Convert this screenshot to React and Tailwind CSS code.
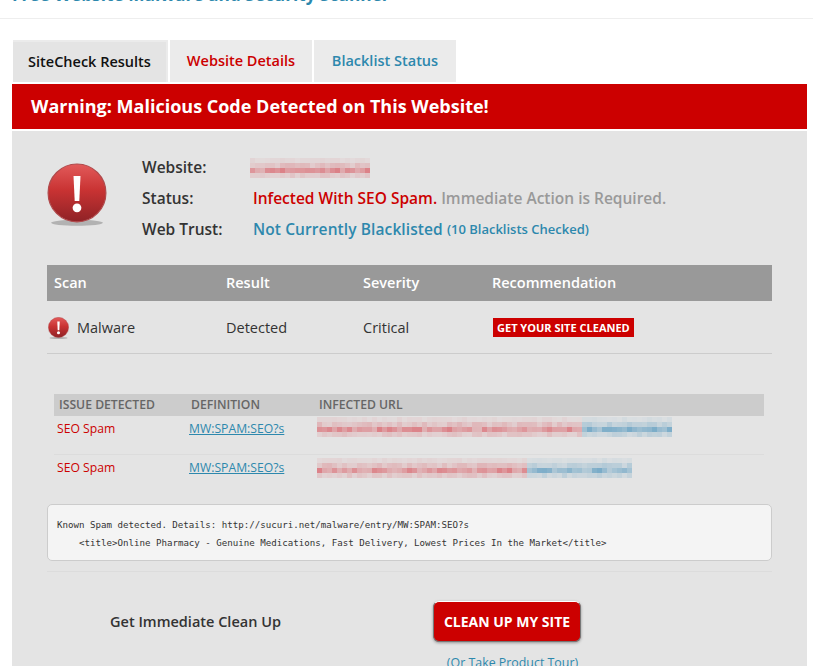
import React from "react";

const font = { fontFamily: '"Open Sans", sans-serif' };

// pixelated smear that stands in for the redacted urls
const Mosaic = ({ width, split, seed, rows = 4, red = "#d9646c", blue = "#5d9cc0" }) => {
  const cell = 5;
  const cols = Math.ceil(width / cell);
  const cells = [];
  for (let r = 0; r < rows; r++) {
    for (let c = 0; c < cols; c++) {
      const n = Math.abs(Math.sin((c + 1) * 12.9898 + (r + 1) * 78.233 + seed) * 43758.5453) % 1;
      const base = [0.1, 0.28, 0.6, 0.22][r % 4];
      const o = base * (0.6 + n * 0.7);
      cells.push(
        <rect
          key={r + "-" + c}
          x={c * cell}
          y={r * cell}
          width={cell}
          height={cell}
          fill={c * cell < split ? red : blue}
          opacity={o}
        />
      );
    }
  }
  return (
    <svg width={width} height={rows * cell} className="block">
      {cells}
    </svg>
  );
};

const AlertBall = ({ size }) => (
  <svg width={size} height={size * 1.08} viewBox="0 0 60 65">
    <defs>
      <linearGradient id={"ball" + size} x1="0" y1="0" x2="0" y2="1">
        <stop offset="0" stopColor="#e25a5a" />
        <stop offset="0.45" stopColor="#c93333" />
        <stop offset="1" stopColor="#8f2226" />
      </linearGradient>
    </defs>
    <ellipse cx="30" cy="60" rx="26" ry="3" fill="#000" opacity="0.22" />
    <circle cx="30" cy="30" r="29" fill={"url(#ball" + size + ")"} stroke="#b04a4c" strokeWidth="1.2" />
    <path d="M26.5 13h7l-1.2 25h-4.6z" fill="#fff" />
    <circle cx="30" cy="45" r="4.4" fill="#fff" />
  </svg>
);

const issues = [
  { width: 355, split: 262, seed: 3 },
  { width: 315, split: 210, seed: 9 },
];

export default function App() {
  return (
    <div className="min-h-screen bg-white overflow-hidden" style={font}>
      {/* cropped page title */}
      <div className="h-[19px] border-b border-[#eeeeee] overflow-hidden pl-3">
        <h1 className="-mt-[17px] text-[17.3px] leading-[24px] font-bold text-[#2d88ad] whitespace-nowrap">
          Free Website Malware and Security Scanner
        </h1>
      </div>

      <div className="pl-3 pr-[6px] pt-[21px]">
        {/* Tabs */}
        <div className="flex h-[42px] pl-px text-[14.5px] font-semibold">
          <div className="w-[155px] bg-[#ebebeb] pr-[2px] flex">
            <div className="w-full mt-[2px] pb-[1px] bg-[#e4e4e4] flex items-center justify-center text-[#111111]">
              SiteCheck Results
            </div>
          </div>
          <div className="w-[142px] ml-[2px] bg-[#ebebeb] flex items-center justify-center text-[#cc0000]">
            Website Details
          </div>
          <div className="w-[142px] ml-[2px] bg-[#ebebeb] flex items-center justify-center text-[#2d88ad]">
            Blacklist Status
          </div>
        </div>

        {/* Warning bar */}
        <div className="mt-[2px] h-[45px] bg-[#cc0000] flex items-center pl-[19px] text-white text-[18px] font-bold">
          Warning: Malicious Code Detected on This Website!
        </div>

        {/* Panel */}
        <div className="mt-[2px] bg-[#e4e4e4] px-[35px] pt-[21px] pb-[40px]">
          <div className="flex h-[113px]">
            <div className="w-[95px] pt-[11px]">
              <AlertBall size={60} />
            </div>
            <div className="flex flex-col text-[15.5px] font-semibold text-[#333333]">
              <div className="flex h-[31px] items-center">
                <span className="w-[108px] mr-[3px]">Website:</span>
                <div className="-ml-[3px]">
                  <Mosaic width={120} split={120} seed={5} rows={4} />
                </div>
              </div>
              <div className="flex h-[31px] items-center">
                <span className="w-[108px] mr-[3px]">Status:</span>
                <span className="text-[#cc0000]">Infected With SEO Spam.</span>
                <span className="ml-1 text-[#999999]">Immediate Action is Required.</span>
              </div>
              <div className="flex h-[31px] items-center">
                <span className="w-[108px] mr-[3px]">Web Trust:</span>
                <span className="text-[#2d88ad] tracking-[0.1px]">Not Currently Blacklisted</span>
                <span className="ml-1 mt-px text-[13px] text-[#2d88ad]">(10 Blacklists Checked)</span>
              </div>
            </div>
          </div>

          {/* Scan table */}
          <div className="flex h-[36px] items-center bg-[#999999] pl-[7px] text-[14.5px] font-semibold text-white">
            <span className="w-[172px]">Scan</span>
            <span className="w-[137px]">Result</span>
            <span className="w-[129px]">Severity</span>
            <span>Recommendation</span>
          </div>
          <div className="flex h-[53px] items-center border-b border-[#cccccc] pt-[2px] text-[14.5px] text-[#333333]">
            <div className="flex w-[179px] items-center">
              <div className="w-[30px] pl-px">
                <AlertBall size={21} />
              </div>
              <span>Malware</span>
            </div>
            <span className="w-[137px]">Detected</span>
            <span className="w-[130px]">Critical</span>
            <span className="-mt-[1px] bg-[#cc0000] px-[4px] h-[19px] leading-[19px] text-[11px] font-bold text-white">
              GET YOUR SITE CLEANED
            </span>
          </div>

          {/* Issue table */}
          <div className="mt-[40px] ml-[7px] mr-[8px]">
            <div className="flex h-[22px] items-center bg-[#cccccc] pl-[5px] text-[12.2px] font-semibold text-[#666666]">
              <span className="w-[132px]">ISSUE DETECTED</span>
              <span className="w-[128px]">DEFINITION</span>
              <span>INFECTED URL</span>
            </div>
            {issues.map((row, i) => (
              <div
                key={i}
                className={
                  "flex items-start pl-[3px] text-[12.2px] " +
                  (i === 0 ? "h-[39px] border-b border-[#dcdcdc] pt-[4px]" : "h-[39px] pt-[4px]")
                }
              >
                <span className="w-[132px] text-[#cc0000]">SEO Spam</span>
                <a className="w-[128px] text-[#2d88ad] underline">MW:SPAM:SEO?s</a>
                <div className={i === 0 ? "-mt-[3px]" : "-mt-[1px]"}>
                  <Mosaic width={row.width} split={row.split} seed={row.seed} />
                </div>
              </div>
            ))}
          </div>

          {/* Details box */}
          <div className="mt-[10px] h-[57px] rounded-[5px] border border-[#cccccc] bg-[#f4f4f4] pl-[9px] pt-[11px] font-['DejaVu_Sans_Mono',monospace] text-[9.15px] leading-[18px] text-[#333333]">
            <div>Known Spam detected. Details: http://sucuri.net/malware/entry/MW:SPAM:SEO?s</div>
            <div className="pl-[22px]">{"<title>Online Pharmacy - Genuine Medications, Fast Delivery, Lowest Prices In the Market</title>"}</div>
          </div>
          <div className="mt-[10px] h-px bg-[#dcdcdc]" />

          {/* Call to action */}
          <div className="flex mt-[29px]">
            <div className="w-[386px] pl-[63px] pt-[10px] text-[14.5px] font-semibold text-[#333333]">
              Get Immediate Clean Up
            </div>
            <div className="flex w-[148px] flex-col items-center">
              <button className="h-[41px] w-[148px] rounded-[6px] border border-[#777777] border-t-white bg-[#cc0000] text-[14px] font-bold text-white shadow-[0_1px_3px_rgba(0,0,0,0.35)]">
                CLEAN UP MY SITE
              </button>
              <a className="mt-[12px] ml-[11px] whitespace-nowrap text-[12.4px] text-[#2d88ad]">(Or Take Product Tour)</a>
            </div>
          </div>
        </div>
      </div>
    </div>
  );
}
